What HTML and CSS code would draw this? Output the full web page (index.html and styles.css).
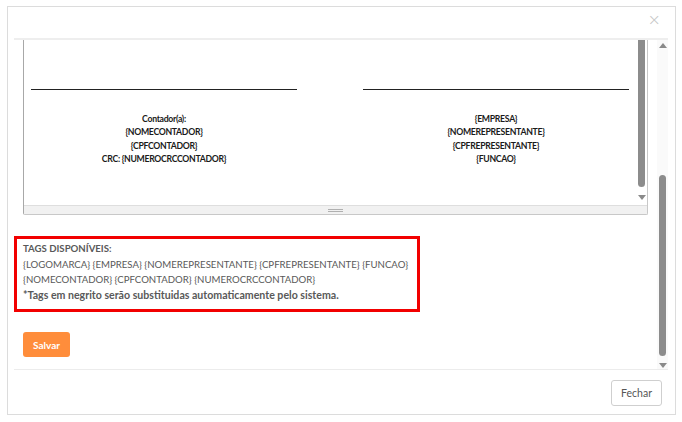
FILE: index.html
```html
<!DOCTYPE html>
<html lang="pt-BR">
<head>
<meta charset="utf-8">
<title>Modelo</title>
<link rel="stylesheet" href="styles.css">
</head>
<body>
<div class="modal">
  <div class="modal-header">
    <span class="close">&times;</span>
  </div>
  <div class="divider"></div>
  <div class="modal-body">
    <div class="body-content">
      <div class="editor">
        <div class="editor-area">
          <div class="sign-grid">
            <div class="sign-col">
              <div class="sign-line"></div>
              <div class="sign-text">
                <div>Contador(a):</div>
                <div>{NOMECONTADOR}</div>
                <div>{CPFCONTADOR}</div>
                <div>CRC: {NUMEROCRCCONTADOR}</div>
              </div>
            </div>
            <div class="sign-col">
              <div class="sign-line"></div>
              <div class="sign-text">
                <div>{EMPRESA}</div>
                <div>{NOMEREPRESENTANTE}</div>
                <div>{CPFREPRESENTANTE}</div>
                <div>{FUNCAO}</div>
              </div>
            </div>
          </div>
          <div class="inner-scroll">
            <div class="inner-thumb"></div>
            <div class="arrow-down"></div>
          </div>
        </div>
        <div class="editor-status"><span class="grip"></span></div>
      </div>
      <div class="tags-box">
        <div class="tags-title">TAGS DISPONÍVEIS:</div>
        <div>{LOGOMARCA} {EMPRESA} {NOMEREPRESENTANTE} {CPFREPRESENTANTE} {FUNCAO}</div>
        <div>{NOMECONTADOR} {CPFCONTADOR} {NUMEROCRCCONTADOR}</div>
        <div class="tags-note">*Tags em negrito serão substituidas automaticamente pelo sistema.</div>
      </div>
      <button class="btn-save">Salvar</button>
    </div>
    <div class="outer-scroll">
      <div class="arrow-up"></div>
      <div class="outer-thumb"></div>
      <div class="arrow-down"></div>
    </div>
  </div>
  <div class="divider footer-divider"></div>
  <div class="modal-footer">
    <button class="btn-close">Fechar</button>
  </div>
</div>
</body>
</html>
```

FILE: styles.css
```css
* { box-sizing: border-box; }
html, body { margin: 0; padding: 0; background: #fff; }
body {
  font-family: Lato, "Open Sans", sans-serif;
  color: #555;
}
.modal {
  margin: 6px 0 0 7px;
  width: 669px;
  height: 409px;
  border: 1px solid #dcdcdc;
  display: flex;
  flex-direction: column;
}
.modal-header {
  height: 31px;
  position: relative;
  flex: none;
}
.close {
  position: absolute;
  right: 14px;
  top: 5px;
  font-size: 16px;
  line-height: 16px;
  color: #c4c4c4;
  font-family: "DejaVu Sans", sans-serif;
  font-weight: 300;
}
.divider {
  height: 2px;
  background: #eeeeee;
  margin: 0 7px 0 6px;
  flex: none;
}
.modal-body {
  position: relative;
  height: 329px;
  margin: 0 7px 0 6px;
  overflow: hidden;
  flex: none;
}
.body-content {
  padding: 0 0 0 9px;
  width: 634px;
}
.editor {
  width: 625px;
  border: 1px solid #c8c8c8;
  border-top: none;
  border-left: 1px solid #a8a8a8;
  border-radius: 0 0 2px 2px;
}
.editor-area {
  position: relative;
  height: 165px;
  background: #fff;
}
.sign-grid {
  display: grid;
  grid-template-columns: 266px 266px;
  column-gap: 66px;
  padding: 49px 0 0 7px;
}
.sign-line {
  height: 1px;
  background: #222;
}
.sign-text {
  margin-top: 22px;
  text-align: center;
  font-family: Lato, sans-serif;
  font-weight: bold;
  font-size: 8.7px;
  line-height: 13.4px;
  letter-spacing: -0.3px;
  color: #1a1a1a;
}
.inner-scroll {
  position: absolute;
  right: 0;
  top: 0;
  width: 10px;
  height: 165px;
}
.inner-thumb {
  position: absolute;
  left: 1px;
  top: 0;
  width: 7px;
  height: 147px;
  background: #8c8c8c;
  border-radius: 0 0 4px 4px;
}
.arrow-down {
  position: absolute;
  left: 1px;
  bottom: 5px;
  width: 0;
  height: 0;
  border-left: 4px solid transparent;
  border-right: 4px solid transparent;
  border-top: 5px solid #8a8a8a;
}
.arrow-up {
  position: absolute;
  left: 2px;
  top: 3px;
  width: 0;
  height: 0;
  border-left: 4px solid transparent;
  border-right: 4px solid transparent;
  border-bottom: 5px solid #8a8a8a;
}
.editor-status {
  height: 9px;
  background: #f1f1f1;
  border-top: 1px solid #dedede;
  display: flex;
  justify-content: center;
  align-items: center;
}
.grip {
  width: 15px;
  height: 3px;
  border-top: 1px solid #b0b0b0;
  border-bottom: 1px solid #b0b0b0;
}
.tags-box {
  margin: 21px 0 0 -9px;
  width: 406px;
  border: 3px solid #f20000;
  padding: 2px 6px 6px 6px;
  font-size: 9.65px;
  line-height: 15.6px;
  color: #595959;
  white-space: nowrap;
}
.tags-title {
  font-weight: bold;
}
.tags-note {
  font-weight: bold;
  font-size: 10.6px;
}
.btn-save {
  margin-top: 20px;
  display: block;
  width: 47px;
  height: 25px;
  border: none;
  border-radius: 3px;
  background: #ff8d3b;
  color: #fff;
  font-family: Lato, sans-serif;
  font-weight: bold;
  font-size: 10px;
  padding: 0;
}
.outer-scroll {
  position: absolute;
  right: 0;
  top: 0;
  width: 11px;
  height: 329px;
  background: #fafafa;
}
.outer-thumb {
  position: absolute;
  left: 2px;
  top: 135px;
  width: 7px;
  height: 181px;
  background: #8c8c8c;
  border-radius: 4px;
}
.outer-scroll .arrow-down {
  left: 2px;
  bottom: 1px;
}
.footer-divider {
  height: 1px;
  background: #ececec;
}
.modal-footer {
  flex: 1;
  display: flex;
  justify-content: flex-end;
  align-items: flex-start;
  padding: 10px 13px 0 0;
}
.btn-close {
  width: 51px;
  height: 26px;
  background: #fff;
  border: 1px solid #cfcfcf;
  border-radius: 3px;
  font-family: Lato, sans-serif;
  font-size: 10.5px;
  color: #555;
  padding: 0;
}
```
